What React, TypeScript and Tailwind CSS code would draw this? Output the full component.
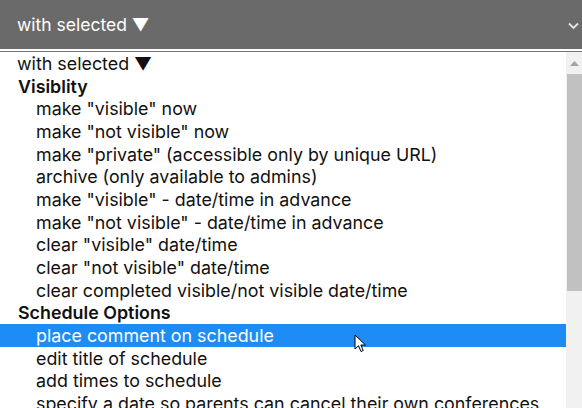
import React from "react";

type Row = { label: string; kind: "plain" | "group" | "option"; active?: boolean };

const rows: Row[] = [
  { label: "with selected ▼", kind: "plain" },
  { label: "Visiblity", kind: "group" },
  { label: 'make "visible" now', kind: "option" },
  { label: 'make "not visible" now', kind: "option" },
  { label: 'make "private" (accessible only by unique URL)', kind: "option" },
  { label: "archive (only available to admins)", kind: "option" },
  { label: 'make "visible" - date/time in advance', kind: "option" },
  { label: 'make "not visible" - date/time in advance', kind: "option" },
  { label: 'clear "visible" date/time', kind: "option" },
  { label: 'clear "not visible" date/time', kind: "option" },
  { label: "clear completed visible/not visible date/time", kind: "option" },
  { label: "Schedule Options", kind: "group" },
  { label: "place comment on schedule", kind: "option", active: true },
  { label: "edit title of schedule", kind: "option" },
  { label: "add times to schedule", kind: "option" },
  { label: "specify a date so parents can cancel their own conferences", kind: "option" },
];

function Cursor() {
  return (
    <svg className="absolute left-[354px] top-[334px]" width="13" height="20" viewBox="0 0 13 20">
      <path
        d="M1 1 L1 15 L4.5 11.8 L7 17.5 L9.2 16.5 L6.8 11 L11.5 11 Z"
        fill="#fff"
        stroke="#000"
        strokeWidth="1"
        strokeLinejoin="round"
      />
    </svg>
  );
}

export default function App() {
  return (
    <div className="relative h-[408px] w-[582px] overflow-hidden bg-white font-['Inter','Noto_Sans',sans-serif]">
      <div className="flex h-[49px] items-center justify-between bg-[#6a6a6a] pl-[17px] pr-[3px] pt-[2px]">
        <span className="text-[17.5px] text-white">with selected ▼</span>
        <svg className="shrink-0" width="11" height="8" viewBox="0 0 11 8">
          <path d="M1 1.5 L5.5 6 L10 1.5" fill="none" stroke="#e6e6e6" strokeWidth="1.8" />
        </svg>
      </div>
      <div className="h-[2px] bg-white" />
      <div className="h-[1px] bg-[#767676]" />
      <div className="flex">
        <div className="flex w-[566px] flex-col">
          {rows.map((r, i) => (
            <div
              key={i}
              className={
                "h-[22.67px] shrink-0 whitespace-nowrap pt-[1px] text-[17.85px] leading-[22px] " +
                (r.kind === "plain" ? "pl-[17px] text-[#111] " : "") +
                (r.kind === "group" ? "pl-[18px] font-semibold text-[#111] " : "") +
                (r.kind === "option" ? "pl-[36px] " : "") +
                (r.active ? "bg-[#1e8cf5] text-white" : r.kind === "option" ? "text-[#111]" : "")
              }
            >
              {r.label}
            </div>
          ))}
        </div>
        <div className="flex w-[16px] flex-col bg-[#f1f1f1]">
          <div className="flex h-[22px] items-center justify-center">
            <svg width="9" height="5" viewBox="0 0 9 5">
              <path d="M0 5 L4.5 0 L9 5 Z" fill="#a3a3a3" />
            </svg>
          </div>
          <div className="ml-[1px] h-[217px] bg-[#c1c1c1]" />
        </div>
      </div>
      <Cursor />
    </div>
  );
}
